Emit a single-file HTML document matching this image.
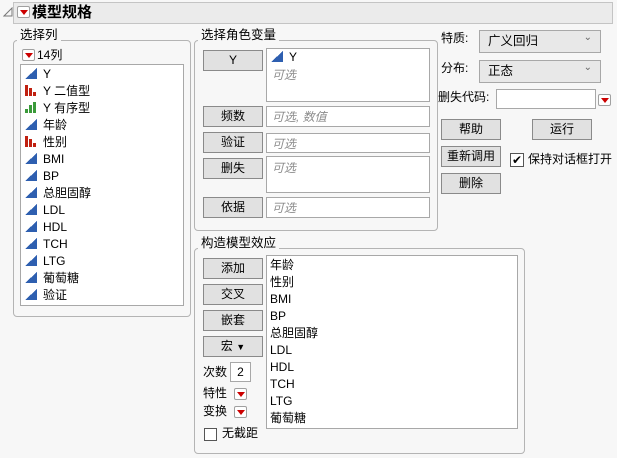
<!DOCTYPE html><html><head><meta charset="utf-8"><style>
*{box-sizing:border-box;margin:0;padding:0}
body{width:617px;height:458px;background:#f7f7f7;font-family:"Liberation Sans","Noto Sans CJK SC",sans-serif;font-size:12px;color:#000;position:relative;overflow:hidden}
.a{position:absolute}
.grp{position:absolute;border:1px solid #b4b4b4;border-radius:4px}
.lg{position:absolute;background:#f7f7f7;padding:0 3px;font-size:12.5px;line-height:14px}
.btn{position:absolute;background:#e1e1e1;border:1px solid #8a8a8a;text-align:center;font-size:12px;line-height:18px}
.box{position:absolute;background:#fff;border:1px solid #a8a8a8}
.ph{color:#8c8c8c;font-style:italic}
.rd{position:absolute;width:13px;height:12px;border:1px solid #a0a0a0;background:#fff;border-radius:2px}
.rd:after{content:"";position:absolute;left:2px;top:3px;border-left:4px solid transparent;border-right:4px solid transparent;border-top:5px solid #c00}
.it{position:absolute;left:4px;height:17px;line-height:17px;white-space:nowrap}
.it i{display:inline-block;width:12px;height:11px;margin-right:6px;vertical-align:-1px}
.cont{background:linear-gradient(to top left,#2e5fb0 50%,transparent 50%)}
.nom{background:linear-gradient(#c02010,#c02010) 0 0/3px 11px no-repeat,linear-gradient(#c02010,#c02010) 4px 3px/3px 8px no-repeat,linear-gradient(#c02010,#c02010) 8px 7px/3px 4px no-repeat}
.ord{background:linear-gradient(#3a9a3a,#3a9a3a) 0 7px/3px 4px no-repeat,linear-gradient(#3a9a3a,#3a9a3a) 4px 3px/3px 8px no-repeat,linear-gradient(#3a9a3a,#3a9a3a) 8px 0/3px 11px no-repeat}
.cb{position:absolute;background:#e8e8e8;border:1px solid #a8a8a8;padding-left:8px;line-height:20px;font-size:12.5px}
.cb:after{content:"⌄";position:absolute;right:8px;top:-3px;font-size:10px;color:#666}
.ml{position:absolute;left:3px;line-height:17px}
</style></head><body>
<svg class="a" style="left:3px;top:7px" width="10" height="10"><path d="M1 9 L9 9 L9 1 Z" fill="none" stroke="#777" stroke-width="1"/></svg>
<div class="a" style="left:13px;top:2px;width:600px;height:22px;background:#ebebeb;border:1px solid #c4c4c4"></div>
<div class="rd" style="left:17px;top:6px"></div>
<div class="a" style="left:32px;top:3px;font-size:15px;font-weight:bold;line-height:19px">模型规格</div>

<div class="grp" style="left:13px;top:40px;width:178px;height:277px"></div>
<div class="lg" style="left:17px;top:28px">选择列</div>
<div class="rd" style="left:22px;top:49px"></div>
<div class="a" style="left:37px;top:48px;line-height:14px">14列</div>
<div class="box" style="left:20px;top:64px;width:164px;height:242px">
<div class="it" style="top:1px"><i class="cont"></i>Y</div>
<div class="it" style="top:18px"><i class="nom"></i>Y 二值型</div>
<div class="it" style="top:35px"><i class="ord"></i>Y 有序型</div>
<div class="it" style="top:52px"><i class="cont"></i>年龄</div>
<div class="it" style="top:69px"><i class="nom"></i>性别</div>
<div class="it" style="top:86px"><i class="cont"></i>BMI</div>
<div class="it" style="top:103px"><i class="cont"></i>BP</div>
<div class="it" style="top:120px"><i class="cont"></i>总胆固醇</div>
<div class="it" style="top:137px"><i class="cont"></i>LDL</div>
<div class="it" style="top:154px"><i class="cont"></i>HDL</div>
<div class="it" style="top:171px"><i class="cont"></i>TCH</div>
<div class="it" style="top:188px"><i class="cont"></i>LTG</div>
<div class="it" style="top:205px"><i class="cont"></i>葡萄糖</div>
<div class="it" style="top:222px"><i class="cont"></i>验证</div>
</div>

<div class="grp" style="left:194px;top:40px;width:244px;height:191px"></div>
<div class="lg" style="left:198px;top:28px">选择角色变量</div>
<div class="btn" style="left:203px;top:50px;width:60px;height:21px">Y</div>
<div class="box" style="left:266px;top:48px;width:164px;height:54px"><div class="it" style="top:0"><i class="cont"></i>Y</div><div class="a ph" style="left:5px;top:18px;line-height:17px">可选</div></div>
<div class="btn" style="left:203px;top:106px;width:60px;height:21px">频数</div>
<div class="box" style="left:266px;top:106px;width:164px;height:21px"><div class="a ph" style="left:5px;top:2px;line-height:16px">可选, 数值</div></div>
<div class="btn" style="left:203px;top:132px;width:60px;height:21px">验证</div>
<div class="box" style="left:266px;top:133px;width:164px;height:20px"><div class="a ph" style="left:5px;top:2px;line-height:16px">可选</div></div>
<div class="btn" style="left:203px;top:158px;width:60px;height:21px">删失</div>
<div class="box" style="left:266px;top:156px;width:164px;height:37px"><div class="a ph" style="left:5px;top:3px;line-height:16px">可选</div></div>
<div class="btn" style="left:203px;top:197px;width:60px;height:21px">依据</div>
<div class="box" style="left:266px;top:197px;width:164px;height:21px"><div class="a ph" style="left:5px;top:2px;line-height:16px">可选</div></div>

<div class="grp" style="left:194px;top:248px;width:331px;height:206px"></div>
<div class="lg" style="left:198px;top:236px">构造模型效应</div>
<div class="btn" style="left:203px;top:258px;width:60px;height:21px">添加</div>
<div class="btn" style="left:203px;top:284px;width:60px;height:21px">交叉</div>
<div class="btn" style="left:203px;top:310px;width:60px;height:21px">嵌套</div>
<div class="btn" style="left:203px;top:336px;width:60px;height:21px">宏 <span style="font-size:9px">▼</span></div>
<div class="a" style="left:203px;top:364px;line-height:16px">次数</div>
<div class="box" style="left:230px;top:362px;width:21px;height:20px;text-align:center;line-height:18px">2</div>
<div class="a" style="left:203px;top:385px;line-height:16px">特性</div><div class="rd" style="left:234px;top:388px"></div>
<div class="a" style="left:203px;top:403px;line-height:16px">变换</div><div class="rd" style="left:234px;top:406px"></div>
<div class="a" style="left:204px;top:428px;width:13px;height:13px;border:1px solid #555;background:#fff"></div>
<div class="a" style="left:222px;top:425px;line-height:16px">无截距</div>
<div class="box" style="left:266px;top:255px;width:252px;height:174px">
<div class="ml" style="top:1px">年龄</div><div class="ml" style="top:18px">性别</div><div class="ml" style="top:35px">BMI</div><div class="ml" style="top:52px">BP</div><div class="ml" style="top:69px">总胆固醇</div><div class="ml" style="top:86px">LDL</div><div class="ml" style="top:103px">HDL</div><div class="ml" style="top:120px">TCH</div><div class="ml" style="top:137px">LTG</div><div class="ml" style="top:154px">葡萄糖</div>
</div>

<div class="a" style="left:441px;top:30px;line-height:16px">特质:</div>
<div class="cb" style="left:479px;top:30px;width:122px;height:23px">广义回归</div>
<div class="a" style="left:441px;top:60px;line-height:16px">分布:</div>
<div class="cb" style="left:479px;top:60px;width:122px;height:23px">正态</div>
<div class="a" style="left:438px;top:89px;line-height:16px">删失代码:</div>
<div class="box" style="left:496px;top:89px;width:100px;height:20px"></div>
<div class="rd" style="left:598px;top:94px"></div>
<div class="btn" style="left:441px;top:119px;width:60px;height:21px">帮助</div>
<div class="btn" style="left:532px;top:119px;width:60px;height:21px">运行</div>
<div class="btn" style="left:441px;top:146px;width:60px;height:21px">重新调用</div>
<div class="a" style="left:510px;top:153px;width:14px;height:14px;border:1px solid #555;background:#fff;font-size:12px;line-height:12px;text-align:center">✔</div>
<div class="a" style="left:528px;top:151px;line-height:16px">保持对话框打开</div>
<div class="btn" style="left:441px;top:173px;width:60px;height:21px">删除</div>
</body></html>
